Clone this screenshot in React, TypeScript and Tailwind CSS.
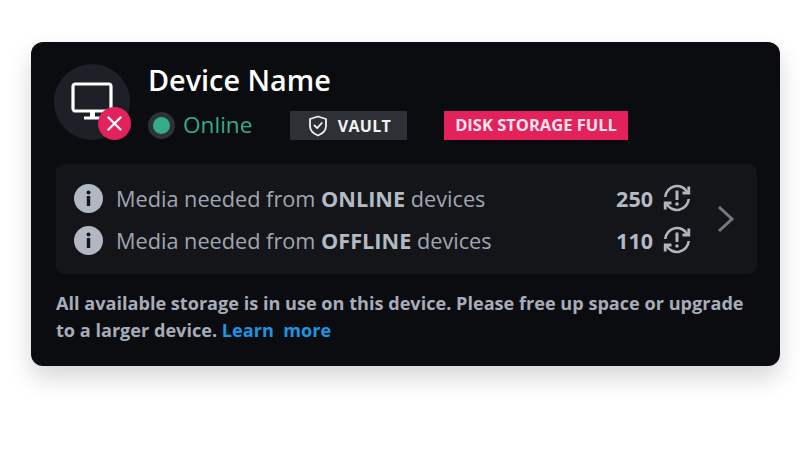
import React from "react";

function Sync() {
  return (
    <svg width="30" height="30" viewBox="0 0 30 30" fill="none" stroke="#b0b6c0" strokeWidth="2.6" className="shrink-0">
      <path d="M3.3 14 A11.8 11.8 0 0 1 25.6 9.5" />
      <path d="M26.7 16 A11.8 11.8 0 0 1 4.4 20.5" />
      <path d="M26.8 3.5 V10 H20.5" strokeWidth="2.8" />
      <path d="M3.2 26.5 V20 H9.5" strokeWidth="2.8" />
      <path d="M15 7.5 V17" strokeWidth="3" />
      <circle cx="15" cy="21" r="1.8" fill="#b0b6c0" stroke="none" />
    </svg>
  );
}

function Info() {
  return (
    <svg width="29" height="29" viewBox="0 0 29 29" className="shrink-0">
      <circle cx="14.5" cy="14.5" r="14.5" fill="#b1b8c4" />
      <circle cx="14.5" cy="8.5" r="2" fill="#14161a" />
      <rect x="12.8" y="12" width="3.4" height="10" fill="#14161a" />
    </svg>
  );
}

function Row({ word, count }: { word: string; count: number }) {
  return (
    <div className="flex items-center h-[42px]">
      <Info />
      <div className="ml-[13px] mt-[1px] text-[21.7px] text-[#a0a6b1] leading-none">
        Media needed from <b className="font-bold text-[#b4bac4]">{word}</b> devices
      </div>
      <div className="ml-auto flex items-center gap-[9px]">
        <span className="mt-[1px] text-[21.5px] font-bold text-[#b4bac4] leading-none">{count}</span>
        <Sync />
      </div>
    </div>
  );
}

export default function App() {
  return (
    <div
      className="w-[800px] h-[450px] bg-white pl-[31px] pt-[42px] overflow-hidden"
      style={{ fontFamily: '"Open Sans", sans-serif' }}
    >
      <div className="w-[749px] h-[324px] rounded-[12px] bg-[#0b0c10] pt-[22px] pl-[25px] pr-[23px] shadow-[0_12px_24px_rgba(0,0,0,0.16)]">
        <div className="flex h-[76px]">
          <div className="relative -ml-[2px] w-[76px] h-[76px] rounded-full bg-[#1e2028] flex items-center justify-center shrink-0">
            <svg width="44" height="40" viewBox="0 0 44 40" fill="none" className="-mt-[1px] ml-[1px]">
              <rect x="2" y="2" width="38" height="27" rx="2.5" stroke="#fff" strokeWidth="3.2" />
              <rect x="19" y="30" width="5" height="5" fill="#fff" />
              <rect x="13" y="34.5" width="18" height="3" fill="#fff" />
            </svg>
            <div className="absolute right-[-1px] bottom-0 w-[33px] h-[33px] rounded-full bg-[#e3215b] flex items-center justify-center">
              <svg width="15" height="15" viewBox="0 0 15 15" stroke="#fff" strokeWidth="2.3" strokeLinecap="round">
                <path d="M1.5 1.5 L13.5 13.5 M13.5 1.5 L1.5 13.5" />
              </svg>
            </div>
          </div>
          <div className="ml-[18px] flex flex-col">
            <div className="text-[28.8px] leading-[34px] font-semibold text-white -mt-[1px]">Device Name</div>
            <div className="flex items-center mt-[14px] h-[29px]">
              <div className="w-[27px] h-[27px] rounded-full bg-[#2e3138] flex items-center justify-center">
                <div className="w-[17px] h-[17px] rounded-full bg-[#35ab8a]" />
              </div>
              <span className="ml-[8px] w-[107px] text-[22.6px] leading-none text-[#35ab8a] -mt-[1px]">Online</span>
              <div className="w-[117px] h-[29px] bg-[#2d3136] flex items-center justify-center gap-[10px] pl-[2px] text-[16px] font-bold text-[#f1f2f4] tracking-[0.3px]">
                <svg width="20" height="22" viewBox="0 0 20 22" fill="none" stroke="#f1f2f4" strokeWidth="1.8" strokeLinejoin="round" strokeLinecap="round">
                  <path d="M10 1.5 L18 4 V11 C18 15.5 14.5 18.8 10 20.5 C5.5 18.8 2 15.5 2 11 V4 Z" />
                  <path d="M6.5 10.5 L9.2 13.2 L13.8 8" />
                </svg>
                VAULT
              </div>
              <div className="ml-[37px] w-[184px] h-[29px] bg-[#e3215b] flex items-center justify-center text-[16.5px] font-bold text-[#fbe4ec]">
                DISK STORAGE FULL
              </div>
            </div>
          </div>
        </div>

        <div className="mt-[24px] h-[110px] rounded-[8px] bg-[#131519] pl-[18px] flex items-center">
          <div className="w-[618px] flex flex-col">
            <Row word="ONLINE" count={250} />
            <Row word="OFFLINE" count={110} />
          </div>
          <svg width="18" height="28" viewBox="0 0 18 28" fill="none" stroke="#74797f" strokeWidth="3" className="ml-[25px]">
            <path d="M2 2 L15 14 L2 26" />
          </svg>
        </div>

        <p className="mt-[16px] text-[18.13px] leading-[27px] font-bold text-[#a7adb8]">
          All available storage is in use on this device. Please free up space or upgrade
          <br />
          to a larger device. <span className="text-[#1d94e0]">Learn&nbsp; more</span>
        </p>
      </div>
    </div>
  );
}
